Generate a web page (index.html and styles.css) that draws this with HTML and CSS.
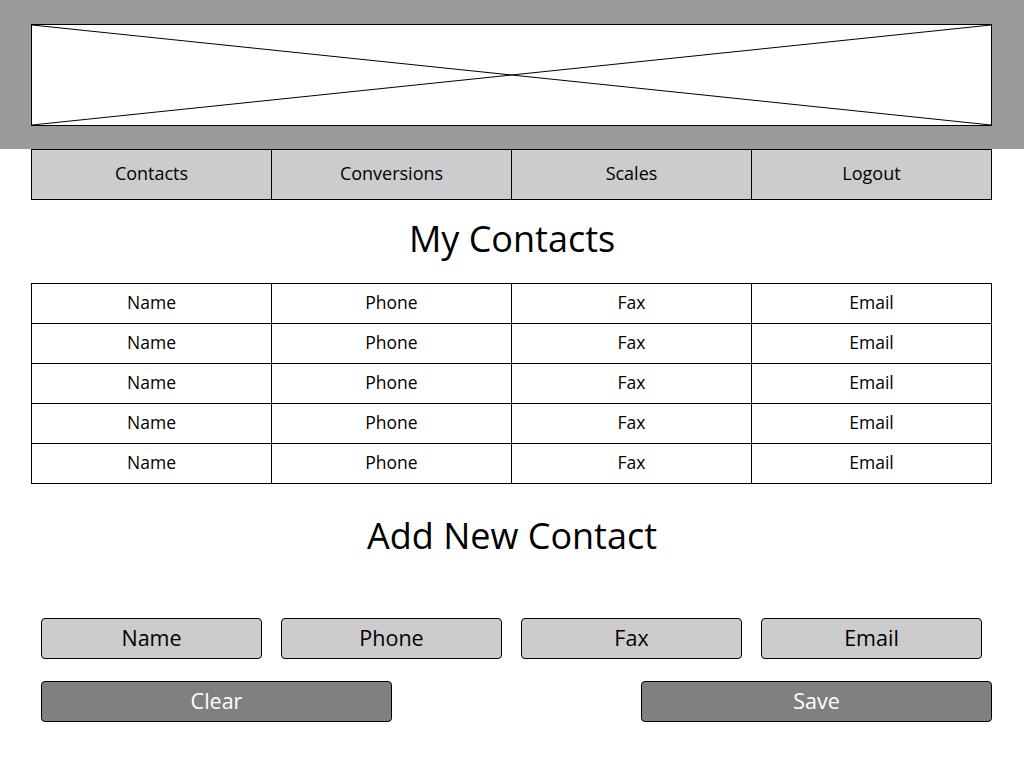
FILE: index.html
```html
<!DOCTYPE html>
<html>
<head>
<meta charset="utf-8">
<link rel="stylesheet" href="styles.css">
</head>
<body>
<header class="header">
  <div class="banner">
    <svg class="banner-x" viewBox="0 0 100 100" preserveAspectRatio="none">
      <line x1="0" y1="0" x2="100" y2="100" vector-effect="non-scaling-stroke"/>
      <line x1="0" y1="100" x2="100" y2="0" vector-effect="non-scaling-stroke"/>
    </svg>
  </div>
</header>
<nav class="nav">
  <div class="nav-item">Contacts</div>
  <div class="nav-item">Conversions</div>
  <div class="nav-item">Scales</div>
  <div class="nav-item">Logout</div>
</nav>
<h1 class="title title-contacts">My Contacts</h1>
<div class="table">
  <div class="row"><div class="cell">Name</div><div class="cell">Phone</div><div class="cell">Fax</div><div class="cell">Email</div></div>
  <div class="row"><div class="cell">Name</div><div class="cell">Phone</div><div class="cell">Fax</div><div class="cell">Email</div></div>
  <div class="row"><div class="cell">Name</div><div class="cell">Phone</div><div class="cell">Fax</div><div class="cell">Email</div></div>
  <div class="row"><div class="cell">Name</div><div class="cell">Phone</div><div class="cell">Fax</div><div class="cell">Email</div></div>
  <div class="row"><div class="cell">Name</div><div class="cell">Phone</div><div class="cell">Fax</div><div class="cell">Email</div></div>
</div>
<h2 class="title title-add">Add New Contact</h2>
<div class="fields">
  <div class="field">Name</div>
  <div class="field">Phone</div>
  <div class="field">Fax</div>
  <div class="field">Email</div>
</div>
<div class="actions">
  <div class="btn">Clear</div>
  <div class="btn">Save</div>
</div>
</body>
</html>
```

FILE: styles.css
```css
* { box-sizing: border-box; }
html, body {
  margin: 0;
  padding: 0;
  background: #fff;
  font-family: "Open Sans", "Liberation Sans", sans-serif;
  color: #000;
}
.header {
  background: #9b9b9b;
  height: 149px;
  padding: 24px 31px 0 31px;
}
.banner {
  width: 961px;
  height: 102px;
  background: #fff;
  border: 1px solid #000;
  position: relative;
}
.banner-x {
  display: block;
  width: 100%;
  height: 100%;
}
.banner-x line {
  stroke: #000;
  stroke-width: 1;
}
.nav {
  margin: 0 0 0 31px;
  width: 961px;
  height: 51px;
  display: grid;
  grid-template-columns: repeat(4, 240px);
  border: 1px solid #000;
  border-left: none;
  background: #cccccc;
}
.nav-item {
  border-left: 1px solid #000;
  display: flex;
  align-items: center;
  justify-content: center;
  font-size: 18px;
  padding-bottom: 4px;
}
.title {
  margin: 0;
  text-align: center;
  font-weight: 400;
  font-size: 36px;
  line-height: 48px;
}
.title-contacts {
  padding: 15px 0 20px;
}
.title-add {
  padding: 28px 0 58px;
}
.table {
  margin-left: 31px;
  width: 961px;
  border-right: 1px solid #000;
  border-bottom: 1px solid #000;
}
.row {
  display: grid;
  grid-template-columns: repeat(4, 240px);
  height: 40px;
  border-top: 1px solid #000;
}
.cell {
  border-left: 1px solid #000;
  display: flex;
  align-items: center;
  justify-content: center;
  font-size: 17.5px;
  padding-bottom: 4px;
}
.fields {
  margin-left: 41px;
  display: flex;
  gap: 19px;
}
.field {
  width: 221px;
  height: 41px;
  background: #cccccc;
  border: 1px solid #000;
  border-radius: 4px;
  display: flex;
  align-items: center;
  justify-content: center;
  font-size: 21.5px;
  padding-bottom: 3px;
}
.actions {
  margin: 22px 0 0 41px;
  width: 951px;
  display: flex;
  justify-content: space-between;
}
.btn {
  width: 351px;
  height: 41px;
  background: #808080;
  border: 1px solid #000;
  border-radius: 4px;
  color: #fff;
  display: flex;
  align-items: center;
  justify-content: center;
  font-size: 21.5px;
  padding-bottom: 3px;
}
```
